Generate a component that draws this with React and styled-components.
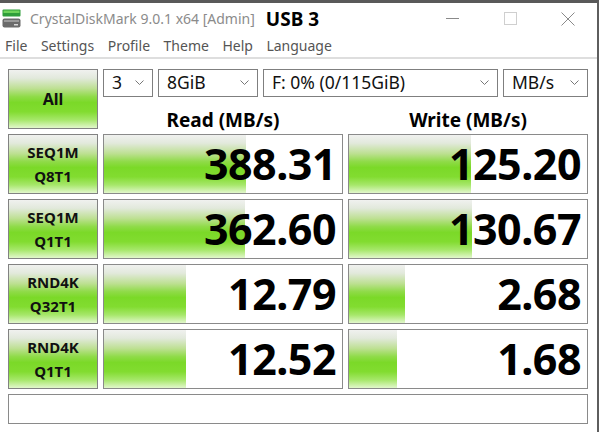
import React from 'react'
import styled, { createGlobalStyle } from 'styled-components'

const GlobalStyle = createGlobalStyle`
  html, body {
    margin: 0;
    padding: 0;
    background: #fff;
    overflow: hidden;
  }
  * {
    box-sizing: border-box;
  }
`

const uiFont = `"Noto Sans", "Open Sans", sans-serif`

const results = [
  { label: ['SEQ1M', 'Q8T1'], read: '388.31', readBar: 59.7, write: '125.20', writeBar: 51.3 },
  { label: ['SEQ1M', 'Q1T1'], read: '362.60', readBar: 59.3, write: '130.67', writeBar: 51.7 },
  { label: ['RND4K', 'Q32T1'], read: '12.79', readBar: 34.5, write: '2.68', writeBar: 23.6 },
  { label: ['RND4K', 'Q1T1'], read: '12.52', readBar: 34.5, write: '1.68', writeBar: 20.2 },
]

const menus = ['File', 'Settings', 'Profile', 'Theme', 'Help', 'Language']

const AppIcon = () => (
  <svg width="19" height="19" viewBox="0 0 19 19">
    <rect x="0.5" y="0.5" width="18" height="7" rx="1" fill="#2f9e3a" />
    <rect x="1.5" y="1.5" width="16" height="2.5" fill="#6fd35a" />
    <rect x="0.5" y="9.5" width="18" height="9" rx="2" fill="#6b6b6b" />
    <rect x="2" y="11" width="15" height="2" fill="#9a9a9a" />
    <rect x="12" y="15" width="4" height="1.5" fill="#d8d8d8" />
  </svg>
)

const Chevron = () => (
  <svg width="9" height="5" viewBox="0 0 9 5">
    <path d="M0.5 0.5 L4.5 4.5 L8.5 0.5" fill="none" stroke="#777" strokeWidth="1" />
  </svg>
)

const Combo = ({ width, children }) => (
  <ComboBox $width={width}>
    <span>{children}</span>
    <Chevron />
  </ComboBox>
)

const ResultCell = ({ value, bar }) => (
  <ValueCell style={{ backgroundSize: `${bar}% 100%` }}>{value}</ValueCell>
)

export default function App() {
  return (
    <Window>
      <GlobalStyle />
      <TitleBar>
        <IconWrap><AppIcon /></IconWrap>
        <TitleText>CrystalDiskMark 9.0.1 x64 [Admin]</TitleText>
        <DriveTitle>USB 3</DriveTitle>
        <Controls>
          <CtrlButton>
            <svg width="13" height="13" viewBox="0 0 13 13">
              <path d="M0 6.5 H13" stroke="#8a8a8a" strokeWidth="1" />
            </svg>
          </CtrlButton>
          <CtrlButton>
            <svg width="13" height="13" viewBox="0 0 13 13">
              <rect x="0.5" y="0.5" width="12" height="12" fill="none" stroke="#cfcfcf" />
            </svg>
          </CtrlButton>
          <CtrlButton>
            <svg width="14" height="14" viewBox="0 0 14 14">
              <path d="M0.5 0.5 L13.5 13.5 M13.5 0.5 L0.5 13.5" stroke="#8a8a8a" strokeWidth="1" />
            </svg>
          </CtrlButton>
        </Controls>
      </TitleBar>

      <MenuBar>
        {menus.map(m => <MenuItem key={m}>{m}</MenuItem>)}
      </MenuBar>

      <Content>
        <Grid>
          <GreenButton $big>All</GreenButton>
          <TopPanel>
            <ComboRow>
              <Combo width={50}>3</Combo>
              <Combo width={100}>8GiB</Combo>
              <Combo width={235}>F: 0% (0/115GiB)</Combo>
              <Combo width={85}>MB/s</Combo>
            </ComboRow>
            <HeaderRow>
              <ColumnTitle>Read (MB/s)</ColumnTitle>
              <ColumnTitle>Write (MB/s)</ColumnTitle>
            </HeaderRow>
          </TopPanel>

          {results.map(r => (
            <React.Fragment key={r.label.join('-')}>
              <GreenButton>
                <span>{r.label[0]}</span>
                <span>{r.label[1]}</span>
              </GreenButton>
              <ResultCell value={r.read} bar={r.readBar} />
              <ResultCell value={r.write} bar={r.writeBar} />
            </React.Fragment>
          ))}

          <StatusBar />
        </Grid>
      </Content>
    </Window>
  )
}

const greenGradient = `linear-gradient(to bottom,
  #f0f1ef 0%,
  #e2e9dc 14%,
  #bde092 32%,
  #8fdb48 46%,
  #7bd928 56%,
  #82dc30 72%,
  #a6e76a 86%,
  #e2f7cc 100%)`

const Window = styled.div`
  width: 599px;
  height: 432px;
  border-top: 3px solid #595959;
  border-right: 2px solid #5e5e5e;
  background: #fff;
  font-family: ${uiFont};
  overflow: hidden;
`

/** title bar **/
const TitleBar = styled.div`
  height: 31px;
  display: flex;
  align-items: center;
`

const IconWrap = styled.div`
  width: 22px;
  padding-left: 2px;
  display: flex;
  align-items: center;
`

const TitleText = styled.span`
  margin-left: 8px;
  font-size: 14px;
  color: #8b8b8b;
  white-space: nowrap;
`

const DriveTitle = styled.span`
  margin-left: 11px;
  font-size: 19px;
  font-weight: 700;
  color: #000;
  white-space: nowrap;
`

const Controls = styled.div`
  margin-left: auto;
  display: flex;
  height: 100%;
`

const CtrlButton = styled.div`
  width: 58px;
  display: flex;
  align-items: center;
  justify-content: center;
`

/** menu **/
const MenuBar = styled.div`
  height: 25px;
  display: flex;
  align-items: center;
  padding-left: 5px;
  gap: 13.5px;
  border-bottom: 2px solid #dedede;
`

const MenuItem = styled.span`
  font-size: 14px;
  color: #555;
`

/** benchmark panel **/
const Content = styled.div`
  padding: 10px 0 0 8px;
`

const Grid = styled.div`
  display: grid;
  grid-template-columns: 90px 240px 240px;
  grid-template-rows: 60px 60px 60px 60px 60px 30px;
  gap: 5px;
`

const GreenButton = styled.div`
  border: 1px solid #828282;
  background: ${greenGradient};
  display: flex;
  flex-direction: column;
  align-items: center;
  justify-content: center;
  font-weight: 700;
  font-size: ${p => (p.$big ? '16px' : '15px')};
  line-height: 24px;
  color: #111;
`

const TopPanel = styled.div`
  grid-column: 2 / 4;
  display: flex;
  flex-direction: column;
`

const ComboRow = styled.div`
  height: 30px;
  display: flex;
  gap: 5px;
`

const ComboBox = styled.div`
  width: ${p => p.$width}px;
  border: 1px solid #7f7f7f;
  display: flex;
  align-items: center;
  justify-content: space-between;
  padding: 0 8px 2px 8px;
  font-size: 17.5px;
  color: #111;
  white-space: nowrap;
`

const HeaderRow = styled.div`
  flex: 1;
  display: grid;
  grid-template-columns: 240px 240px;
  gap: 5px;
  align-items: center;
`

const ColumnTitle = styled.div`
  text-align: center;
  font-size: 19px;
  font-weight: 700;
  padding-top: 10px;
  color: #000;
`

const ValueCell = styled.div`
  border: 1px solid #8a8a8a;
  background-color: #fff;
  background-image: ${greenGradient};
  background-repeat: no-repeat;
  display: flex;
  align-items: center;
  justify-content: flex-end;
  padding: 0 6px 2px 0;
  font-size: 43px;
  font-weight: 700;
  letter-spacing: -0.5px;
  color: #000;
`

const StatusBar = styled.div`
  grid-column: 1 / 4;
  border: 1px solid #8a8a8a;
  background: #fff;
`
